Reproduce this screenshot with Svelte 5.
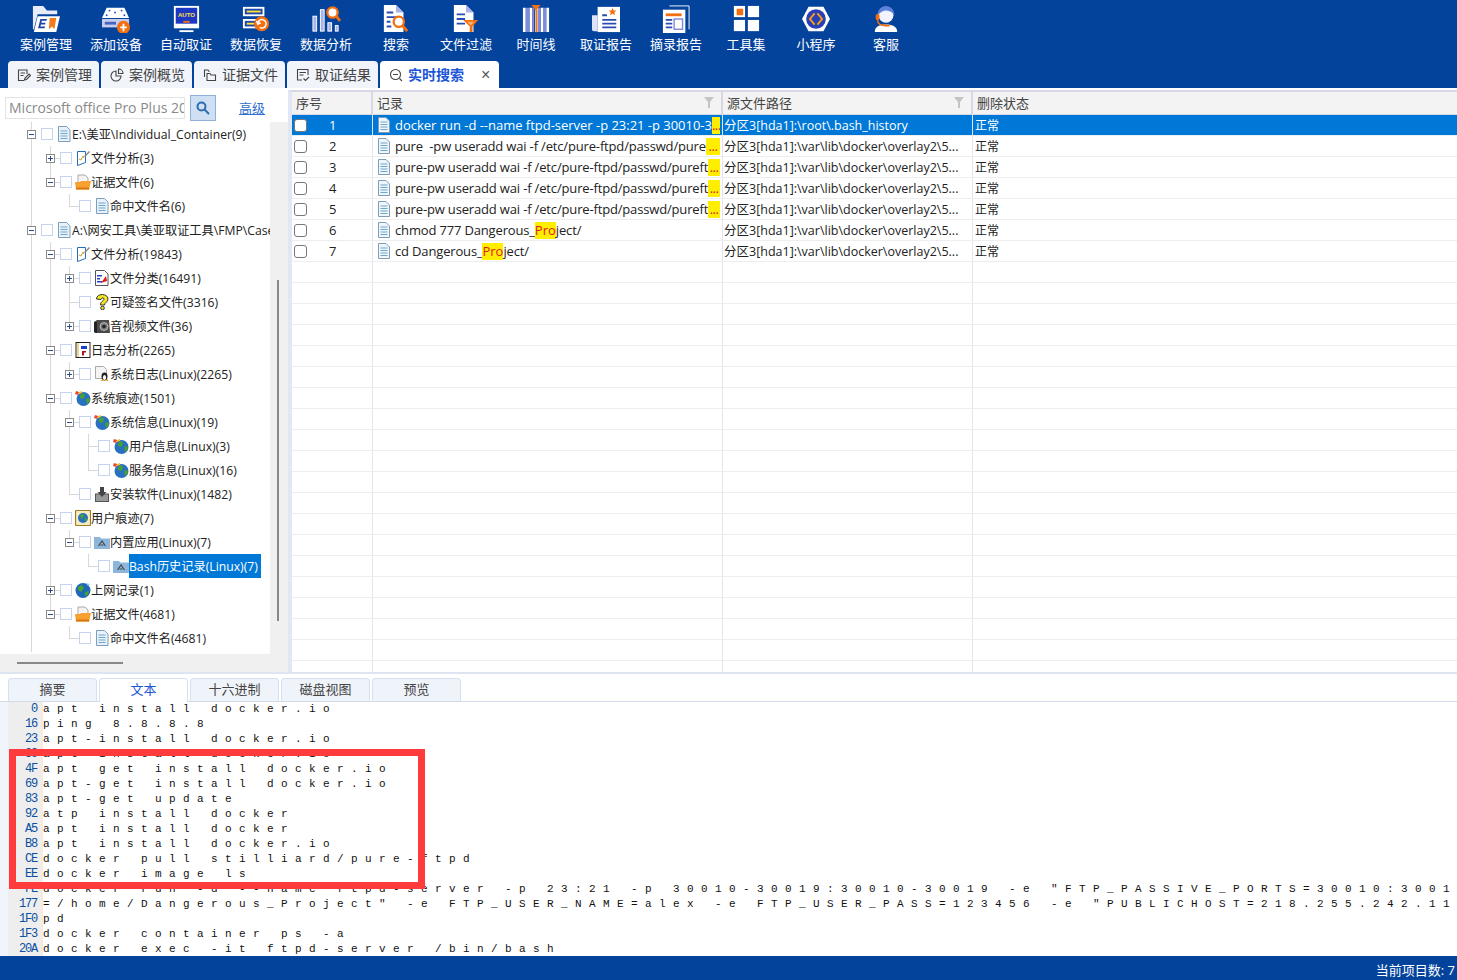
<script>
	const toolbar = [
		['case', '案例管理'],
		['device', '添加设备'],
		['auto', '自动取证'],
		['restore', '数据恢复'],
		['analyse', '数据分析'],
		['search', '搜索'],
		['filter', '文件过滤'],
		['timeline', '时间线'],
		['report', '取证报告'],
		['excerpt', '摘录报告'],
		['tools', '工具集'],
		['mini', '小程序'],
		['service', '客服']
	];

	const tabs = [
		['edit', '案例管理'],
		['pie', '案例概览'],
		['files', '证据文件'],
		['result', '取证结果']
	];

	const tree = [
		{
			icon: 'doc', label: 'E:\\美亚\\Individual_Container(9)', exp: '-',
			children: [
				{ icon: 'analysis', label: '文件分析(3)', exp: '+' },
				{
					icon: 'folder', label: '证据文件(6)', exp: '-',
					children: [{ icon: 'doc', label: '命中文件名(6)' }]
				}
			]
		},
		{
			icon: 'doc', label: 'A:\\网安工具\\美亚取证工具\\FMP\\Case_2023', exp: '-',
			children: [
				{
					icon: 'analysis', label: '文件分析(19843)', exp: '-',
					children: [
						{ icon: 'classify', label: '文件分类(16491)', exp: '+' },
						{ icon: 'question', label: '可疑签名文件(3316)' },
						{ icon: 'camera', label: '音视频文件(36)', exp: '+' }
					]
				},
				{
					icon: 'log', label: '日志分析(2265)', exp: '-',
					children: [{ icon: 'linux', label: '系统日志(Linux)(2265)', exp: '+' }]
				},
				{
					icon: 'globe', label: '系统痕迹(1501)', exp: '-',
					children: [
						{
							icon: 'globe', label: '系统信息(Linux)(19)', exp: '-',
							children: [
								{ icon: 'globe', label: '用户信息(Linux)(3)' },
								{ icon: 'globe', label: '服务信息(Linux)(16)' }
							]
						},
						{ icon: 'install', label: '安装软件(Linux)(1482)' }
					]
				},
				{
					icon: 'trace', label: '用户痕迹(7)', exp: '-',
					children: [
						{
							icon: 'app', label: '内置应用(Linux)(7)', exp: '-',
							children: [{ icon: 'app', label: 'Bash历史记录(Linux)(7)', selected: true }]
						}
					]
				},
				{ icon: 'net', label: '上网记录(1)', exp: '+' },
				{
					icon: 'folder', label: '证据文件(4681)', exp: '-',
					children: [{ icon: 'doc', label: '命中文件名(4681)' }]
				}
			]
		}
	];

	// walk the tree once so each row knows which guide lines cross it
	function flatten(nodes, level = 0, pass = []) {
		return nodes.flatMap((node, i) => {
			const last = i === nodes.length - 1;
			const row = { ...node, level, pass, last };
			const below = level > 0 && !last ? [...pass, level] : pass;
			return [row, ...flatten(node.children ?? [], level + 1, below)];
		});
	}
	const rows = flatten(tree);

	const varPath = '分区3[hda1]:\\var\\lib\\docker\\overlay2\\5...';
	const pwLine = 'pure-pw useradd wai -f /etc/pure-ftpd/passwd/pureft';
	const records = [
		{ text: 'docker run -d --name ftpd-server -p 23:21 -p 30010-3', more: true, path: '分区3[hda1]:\\root\\.bash_history' },
		{ text: 'pure  -pw useradd wai -f /etc/pure-ftpd/passwd/pure', more: true, path: varPath },
		{ text: pwLine, more: true, path: varPath },
		{ text: pwLine, more: true, path: varPath },
		{ text: pwLine, more: true, path: varPath },
		{ text: 'chmod 777 Dangerous_', hit: 'Pro', rest: 'ject/', path: varPath },
		{ text: 'cd Dangerous_', hit: 'Pro', rest: 'ject/', path: varPath }
	];
	const blanks = Array(20);

	const lines = [
		['0', 'apt install docker.io'],
		['16', 'ping 8.8.8.8'],
		['23', 'apt-install docker.io'],
		['39', 'apt install docker.io'],
		['4F', 'apt get install docker.io'],
		['69', 'apt-get install docker.io'],
		['83', 'apt-get update'],
		['92', 'atp install docker'],
		['A5', 'apt install docker'],
		['B8', 'apt install docker.io'],
		['CE', 'docker pull stilliard/pure-ftpd'],
		['EE', 'docker image ls'],
		['FE', 'docker run -d --name ftpd-server -p 23:21 -p 30010-30019:30010-30019 -e "FTP_PASSIVE_PORTS=30010:30019"'],
		['177', '=/home/Dangerous_Project" -e FTP_USER_NAME=alex -e FTP_USER_PASS=123456 -e "PUBLICHOST=218.255.242.114"'],
		['1F0', 'pd'],
		['1F3', 'docker container ps -a'],
		['20A', 'docker exec -it ftpd-server /bin/bash']
	];
</script>

{#snippet toolIcon(name)}
	<svg class="tool-icon" viewBox="0 0 32 30">
		{#if name === 'case'}
			<path d="M2 1h11l4 5h11v4H7L3 26H2z" fill="#e8ebfa" />
			<path d="M7 12h24l-4 17H3z" fill="#fff" />
			<path d="M10 15h7l-.5 2h-5l-.5 2h4.500l-.5 2h-4.500l-.5 2h5l-.5 2h-7z" fill="#1d43a8" />
			<path d="M20 14h7l-2 12-2.500-3-3.500 3z" fill="#f47a1c" />
		{:else if name === 'device'}
			<path d="M6 3h19l5 11H1z" fill="#fff" />
			<circle cx="9" cy="6" r="1" fill="#2a4bb0" /><circle cx="22" cy="6" r="1" fill="#2a4bb0" />
			<circle cx="6" cy="11" r="1" fill="#2a4bb0" /><circle cx="25" cy="11" r="1" fill="#2a4bb0" />
			<circle cx="15" cy="8" r="1" fill="#2a4bb0" />
			<path d="M1 15h29v9H1z" fill="#c7cdf0" />
			<rect x="4" y="18" width="12" height="3" fill="#4565c0" />
			<circle cx="24" cy="24" r="7" fill="#f46f10" />
			<path d="M20.500 23h2.500v-3h2v3h2.500v2h-2.500v3h-2v-3h-2.500z" fill="#fff" />
		{:else if name === 'auto'}
			<rect x="3" y="1" width="27" height="24" fill="#fff" />
			<rect x="5" y="3" width="23" height="17" fill="#1c37c4" />
			<text x="16.500" y="13" class="auto">AUTO</text>
			<rect x="13" y="17" width="7" height="2" fill="#f46f10" />
			<rect x="9" y="27" width="15" height="2" fill="#fff" />
		{:else if name === 'restore'}
			<rect x="2" y="2" width="23" height="10" fill="#fff" />
			<rect x="4" y="4" width="19" height="6" fill="#1d46a8" />
			<rect x="6" y="6" width="15" height="2" fill="#ffe23a" />
			<rect x="2" y="15" width="16" height="10" fill="#fff" />
			<rect x="4" y="17" width="12" height="6" fill="#1d46a8" />
			<rect x="6" y="19" width="8" height="2" fill="#ffe23a" />
			<circle cx="22" cy="20" r="8" fill="#f46f10" />
			<path d="M18 19a4.500 4.500 0 1 1 2 5M16.500 17l1.500 3.500 3-1.500" fill="none" stroke="#fff" stroke-width="1.600" />
		{:else if name === 'analyse'}
			<rect x="2" y="12" width="4" height="16" fill="#aab2ea" stroke="#fff" />
			<rect x="10" y="5" width="4" height="23" fill="#aab2ea" stroke="#fff" />
			<rect x="18" y="19" width="4" height="9" fill="#aab2ea" stroke="#fff" />
			<rect x="26" y="22" width="3" height="6" fill="#aab2ea" stroke="#fff" />
			<circle cx="23" cy="8" r="5.500" fill="#fff" stroke="#f46f10" stroke-width="2.500" />
			<path d="M27 12l4 5" stroke="#f46f10" stroke-width="3" />
		{:else if name === 'search'}
			<path d="M3 0h13l8 8v21H3z" fill="#fff" />
			<path d="M16 0v8h8z" fill="#aab2ea" />
			<path d="M6 7h7v2H6zM6 12h10v2H6zM6 17h4v2H6zM6 22h5v2H6z" fill="#2a4bb0" />
			<circle cx="19" cy="18" r="5.500" fill="#fff" stroke="#f46f10" stroke-width="2.500" />
			<path d="M23 22l5 6" stroke="#f46f10" stroke-width="3" />
		{:else if name === 'filter'}
			<path d="M3 0h13l8 8v21H3z" fill="#fff" />
			<path d="M16 0v8h8z" fill="#aab2ea" />
			<path d="M6 9h9v2H6zM6 14h9v2H6zM6 19h9v2H6z" fill="#2a4bb0" />
			<path d="M13 16h16l-6 7v6h-3v-6z" fill="#f46f10" />
			<path d="M17 18h8l-4 4z" fill="#ffb070" />
		{:else if name === 'timeline'}
			<path d="M2 3h3v26H2zM9 3h3v26H9zM21 3h3v26h-3zM27 3h3v26h-3z" fill="#fff" />
			<path d="M5 3h4v26H5zM12 3h2v26h-2zM18 3h3v26h-3zM24 3h3v26h-3z" fill="#7f8ad8" />
			<path d="M15 3h3v26h-3z" fill="#fff" />
			<path d="M11 0h10l-5 6z" fill="#f46f10" />
			<rect x="15.500" y="5" width="2" height="24" fill="#f46f10" />
		{:else if name === 'report'}
			<path d="M1 11h6v17H3a2 2 0 0 1-2-2z" fill="#dfe3f8" />
			<rect x="7" y="2" width="24" height="27" fill="#fff" />
			<path d="M12 10h5v2h-5zM12 15h15v2H12zM12 19h15v2H12zM12 23h15v2H12z" fill="#2a4bb0" />
			<path d="M23 3l1.200 2.800 3 .2-2.300 2 .8 3-2.700-1.600-2.700 1.600.8-3-2.300-2 3-.2z" fill="#f46f10" />
		{:else if name === 'excerpt'}
			<path d="M9 1h21v25" fill="none" stroke="#fff" />
			<rect x="2" y="5" width="24" height="25" fill="#fff" />
			<rect x="5" y="9" width="17" height="3" fill="#f46f10" />
			<path d="M5 15h7v2H5zM5 19h7v2H5zM5 23h7v2H5z" fill="#2a4bb0" />
			<rect x="14" y="15" width="9" height="11" fill="none" stroke="#7f8ad8" stroke-width="1.500" />
		{:else if name === 'tools'}
			<rect x="3" y="1" width="12" height="12" fill="#fff" />
			<rect x="6" y="4" width="7" height="7" fill="#f46f10" />
			<rect x="18" y="1" width="12" height="12" fill="#fff" />
			<rect x="3" y="16" width="12" height="12" fill="#fff" />
			<rect x="18" y="16" width="12" height="12" fill="#fff" />
		{:else if name === 'mini'}
			<path d="M8 2h16l7 13-7 13H8L1 15z" fill="#fff" />
			<circle cx="16" cy="15" r="10.500" fill="#2a3fb5" />
			<path d="M14.500 9l-5 6 5 6M17.500 9l5 6-5 6" fill="none" stroke="#f7a11c" stroke-width="2" />
		{:else if name === 'service'}
			<path d="M4 29c0-6 5-8 12-8s12 2 12 8z" fill="#fff" />
			<circle cx="16" cy="11" r="8" fill="#f1f3ff" />
			<path d="M7 11c0-6 4-10 9-10s9 4 9 10c-3-4-6-5-9-5s-6 2-9 5z" fill="#5b82d8" />
			<path d="M7 10v6c0 4 4 6 9 6" fill="none" stroke="#f46f10" stroke-width="1.500" />
			<rect x="5" y="10" width="4" height="6" rx="1.500" fill="#f46f10" />
			<rect x="14" y="21" width="6" height="2" rx="1" fill="#f46f10" />
		{/if}
	</svg>
{/snippet}

{#snippet tabIcon(name)}
	<svg class="tab-icon" viewBox="0 0 14 14" fill="none" stroke="#444" stroke-width="1.100">
		{#if name === 'edit'}
			<path d="M10 6V2H1.500v10.500H7M3.500 5h4.500M3.500 7.500h3" />
			<path d="M7.500 12l.5-2 4-4 1.500 1.500-4 4z" />
		{:else if name === 'pie'}
			<path d="M6 3a5 5 0 1 0 5 5H6z" />
			<path d="M8.500 1a4.500 4.500 0 0 1 4.500 4.500H8.500z" />
		{:else if name === 'files'}
			<path d="M1.500 9V2H5l1 1.500h.5M4 12.500V5.500h3l1 1.500h4.500v5.500z" />
		{:else if name === 'result'}
			<path d="M12 7V1.500H1.500V12H6M3.500 4.500h6.500M3.500 7h4" />
			<path d="M7.500 10.500l2 2 3.500-3.500" />
		{:else if name === 'live'}
			<circle cx="6.500" cy="6.500" r="5" />
			<path d="M4 6.500h5M10.500 10.500l2.500 2.500" />
		{/if}
	</svg>
{/snippet}

{#snippet fileIcon()}
	<svg class="file-icon" viewBox="0 0 12 16">
		<path d="M.5.5h7.500l3.500 3.500v11.500H.5z" fill="#eef5fb" stroke="#7d9db8" />
		<path d="M2.500 5h7M2.500 7.500h7M2.500 10h7M2.500 12.500h7" stroke="#6fa5c8" />
	</svg>
{/snippet}

{#snippet treeIcon(name)}
	<svg class="tree-icon" viewBox="0 0 16 16">
		{#if name === 'doc'}
			<path d="M2.500.5h8l3.500 3.500v11.500H2.500z" fill="#e9f2fa" stroke="#7d9db8" />
			<path d="M4.500 5h7M4.500 7.500h7M4.500 10h7M4.500 12.500h7" stroke="#6fa5c8" />
		{:else if name === 'analysis'}
			<path d="M2.500 1.500h8v11l-8 3z" fill="#fff" stroke="#2a6ab8" />
			<path d="M4 9l2 1 2-4 1 2" fill="none" stroke="#c8a030" />
			<path d="M9 6l5-5 1 1-5 5z" fill="#888" />
		{:else if name === 'folder'}
			<path d="M3 1h7l3 3v5H3z" fill="#f4f4f4" stroke="#aaa" />
			<path d="M0 8h5l1-1h10l-2 8.500H1z" fill="#f8a030" />
			<path d="M1 13.500h13.500l-.5 2H1z" fill="#d87810" />
		{:else if name === 'classify'}
			<path d="M1.500.5h9l3.500 3.500v11.500h-12.500z" fill="#fff" stroke="#555" />
			<path d="M3 5h5v1.500H3zM3 8h3v1.500H3zM3 11h5v1.500H3z" fill="#2a40c8" />
			<path d="M7 13l5-7 1 5z" fill="#e01818" />
		{:else if name === 'question'}
			<path d="M2.500 5c0-6 11.500-6 11.500 0 0 3-3.500 3.500-3.500 6h-4c0-4 3.500-4 3.500-6 0-1.500-3-1.500-3 .5z" fill="#f6e51e" stroke="#333" />
			<circle cx="8.500" cy="14" r="1.800" fill="#f6e51e" stroke="#333" />
		{:else if name === 'camera'}
			<path d="M0 4l3-2h12l1 13H2l-2-1z" fill="#4a4a4a" />
			<path d="M0 4h3v11H2l-2-1z" fill="#222" />
			<circle cx="10" cy="8.500" r="4" fill="#777" stroke="#ddd" stroke-width=".7" />
			<circle cx="10" cy="8.500" r="1.800" fill="#222" />
		{:else if name === 'log'}
			<rect x="1" y=".5" width="14" height="15" fill="#fff" stroke="#222" />
			<rect x="2" y="1" width="2" height="14" fill="#e8d890" />
			<path d="M6 4h6v3H6z" fill="#2040c8" />
			<path d="M7 9h4v1.500H9v3H7z" fill="#b01818" />
		{:else if name === 'linux'}
			<path d="M1.500.5h8l3 3v9h-11z" fill="#f4f4f4" stroke="#aaa" />
			<ellipse cx="10.500" cy="10.500" rx="3" ry="4" fill="#222" />
			<ellipse cx="10.500" cy="11.500" rx="1.600" ry="2.500" fill="#fff" />
			<path d="M6.500 15l2-2 1 2zM11.500 15l2-2 1 2z" fill="#f0b010" />
		{:else if name === 'globe'}
			<circle cx="8.500" cy="9" r="7" fill="#2a70c0" />
			<path d="M5 5l4-2 1 3-2 3-3-1zM11 9l3-1 1 3-3 3z" fill="#48a030" />
			<path d="M1 1l3 1-1 3-3-1z" fill="#e8452a" />
			<path d="M4 2l3-1v2l-3 1z" fill="#f0c020" />
		{:else if name === 'install'}
			<rect x="1.500" y="8" width="13" height="7.500" fill="#999" stroke="#555" />
			<path d="M6 1h4v5h2.500L8 11 3.500 6H6z" fill="#444" />
		{:else if name === 'trace'}
			<rect x=".5" y=".5" width="15" height="15" rx="1" fill="#f5ecc0" stroke="#a07c20" stroke-width="1.200" />
			<circle cx="8" cy="8" r="5" fill="#2a70c0" />
			<path d="M5 5l3-1 1 3-3 2zM9 9l3-1-1 4z" fill="#48a030" />
		{:else if name === 'app'}
			<path d="M0 3h6l1 1.500h9V15H0z" fill="#8db6dc" />
			<path d="M4.500 12L8 7l3.500 5M6.500 11h3" fill="none" stroke="#444" stroke-width="1.100" />
		{:else if name === 'net'}
			<circle cx="8" cy="8.500" r="7.500" fill="#1f68b8" />
			<path d="M3 5l4-2 2 3-3 4-3-2zM10 10l4-1-1 4-3 1z" fill="#48a030" />
			<path d="M11 1l4 1-2 2z" fill="#9ac8f0" />
		{/if}
	</svg>
{/snippet}

{#snippet funnel()}
	<svg class="funnel" viewBox="0 0 10 11"><path d="M0 0h10L6 5v6L4 11V5z" fill="#c4c4c4" /></svg>
{/snippet}

<div class="app">
	<header class="toolbar">
		{#each toolbar as [icon, label]}
			<div class="tool">
				{@render toolIcon(icon)}
				<span>{label}</span>
			</div>
		{/each}
	</header>

	<nav class="tabs">
		{#each tabs as [icon, label]}
			<div class="tab">{@render tabIcon(icon)}<span>{label}</span></div>
		{/each}
		<div class="tab active">
			{@render tabIcon('live')}<span>实时搜索</span><i class="close">×</i>
		</div>
	</nav>

	<main class="main">
		<aside class="side">
			<div class="side-inner">
				<div class="search">
					<div class="search-input">Microsoft office Pro Plus 2007</div>
					<button class="search-btn" aria-label="搜索">
						<svg viewBox="0 0 14 14" fill="none" stroke="#2d6cae" stroke-width="2">
							<circle cx="5.500" cy="5.500" r="4" /><path d="M8.500 8.500l4.500 4.500" />
						</svg>
					</button>
					<a class="advanced" href="#top">高级</a>
				</div>
				<div class="tree">
					{#each rows as row}
						<div class="row" style="padding-left: {27 + row.level * 19}px">
							{#each row.pass as p}
								<i class="guide" style="left: {31 + p * 19}px"></i>
							{/each}
							{#if row.level > 0}
								<i class="guide" class:half={row.last} style="left: {31 + row.level * 19}px"></i>
								<i class="stub" style="left: {31 + row.level * 19}px"></i>
							{/if}
							<span class="exp">
								{#if row.exp}
									<b class="box">
										<i class="h"></i>
										{#if row.exp === '+'}<i class="v"></i>{/if}
									</b>
								{/if}
							</span>
							<span class="check"></span>
							{@render treeIcon(row.icon)}
							<span class="label" class:selected={row.selected}>{row.label}</span>
						</div>
					{/each}
				</div>
				<div class="hscroll"><i></i></div>
			</div>
			<div class="vscroll"><i></i></div>
		</aside>

		<section class="table">
			<div class="head">
				<div class="cell">序号</div>
				<div class="cell">记录{@render funnel()}</div>
				<div class="cell">源文件路径{@render funnel()}</div>
				<div class="cell">删除状态</div>
			</div>
			{#each records as r, i}
				<div class="line" class:current={i === 0}>
					<div class="cell no"><span class="tick"></span><span class="num">{i + 1}</span></div>
					<div class="cell rec">
						{@render fileIcon()}
						<span class="rec-text">{r.text}{#if r.hit}<mark>{r.hit}</mark>{r.rest}{/if}</span>
						{#if r.more}<mark class="more">...</mark>{/if}
					</div>
					<div class="cell path">{r.path}</div>
					<div class="cell state">正常</div>
				</div>
			{/each}
			{#each blanks as _}
				<div class="line">
					<div class="cell"></div><div class="cell"></div><div class="cell"></div><div class="cell"></div>
				</div>
			{/each}
		</section>
	</main>

	<section class="detail">
		<div class="detail-tabs">
			<div class="dtab">摘要</div>
			<div class="dtab active">文本</div>
			<div class="dtab">十六进制</div>
			<div class="dtab">磁盘视图</div>
			<div class="dtab">预览</div>
		</div>
		<div class="text-pane">
			{#each lines as [offset, text]}
				<div class="text-line"><span class="offset">{offset}</span><span class="strip"></span><span class="chars">{text}</span></div>
			{/each}
			<div class="mark-box"></div>
		</div>
	</section>

	<footer class="status">当前项目数: 7</footer>
</div>

<style>
	:global(body) {
		margin: 0;
		overflow: hidden;
	}

	.app {
		display: flex;
		flex-direction: column;
		height: 980px;
		font: 13px/20px 'Open Sans', 'Noto Sans CJK SC', sans-serif;
		color: #222;
		background: #fff;
		overflow: hidden;
	}

	.toolbar {
		display: flex;
		height: 60px;
		padding: 5px 0 0 11px;
		box-sizing: border-box;
		background: #03439c;
		flex: none;
	}

	.tool {
		display: flex;
		flex-direction: column;
		align-items: center;
		width: 70px;
		color: #fff;
	}

	.tool span {
		margin-top: 1px;
		line-height: 20px;
	}

	.tool-icon {
		width: 32px;
		height: 28px;
	}

	.auto {
		font: bold 6.500px 'Liberation Sans', sans-serif;
		fill: #ffe23a;
		text-anchor: middle;
	}

	.tabs {
		display: flex;
		gap: 2px;
		height: 28px;
		padding-left: 8px;
		background: #03439c;
		flex: none;
	}

	.tab {
		display: flex;
		align-items: center;
		width: 91px;
		height: 27px;
		margin-top: 1px;
		padding-left: 9px;
		box-sizing: border-box;
		border-radius: 4px 4px 0 0;
		background: #f1f4fa;
		color: #444;
		font-size: 14px;
	}

	.tab span {
		margin-left: 5px;
		white-space: nowrap;
	}

	.tab-icon {
		width: 14px;
		height: 14px;
		flex: none;
	}

	.tab.active {
		width: 119px;
		background: #fff;
		color: #1a55d8;
		font-weight: 700;
	}

	.close {
		margin-left: 17px;
		font: 16px 'Liberation Sans', sans-serif;
		color: #555;
	}

	.main {
		display: flex;
		height: 584px;
		flex: none;
	}

	.side {
		display: flex;
		width: 288px;
		background: #f0f0f0;
		flex: none;
	}

	.side-inner {
		display: flex;
		flex-direction: column;
		width: 270px;
		flex: none;
	}

	.search {
		display: flex;
		align-items: center;
		width: 288px;
		height: 34px;
		padding: 6px 0 0 5px;
		box-sizing: border-box;
		background: #fff;
		flex: none;
	}

	.search-input {
		width: 180px;
		height: 22px;
		box-sizing: border-box;
		border: 1px solid #e3e3e3;
		padding-left: 3px;
		font-size: 14px;
		line-height: 20px;
		color: #8a8a8a;
		white-space: nowrap;
		overflow: hidden;
	}

	.search-btn {
		width: 26px;
		height: 26px;
		margin-left: 5px;
		padding: 0;
		display: flex;
		align-items: center;
		justify-content: center;
		background: #cfe0f5;
		border: 1px solid #8fb0d8;
	}

	.search-btn svg {
		width: 14px;
		height: 14px;
	}

	.advanced {
		margin-left: 23px;
		color: #2f6fd0;
	}

	.tree {
		position: relative;
		height: 532px;
		background: #fff;
		overflow: hidden;
		flex: none;
		font-size: 12.200px;
	}

	.tree::before {
		content: '';
		position: absolute;
		left: 31px;
		top: 0;
		bottom: 2px;
		width: 1px;
		background: #d8d8d8;
	}

	.row {
		position: relative;
		display: flex;
		align-items: center;
		height: 24px;
		white-space: nowrap;
	}

	.guide {
		position: absolute;
		top: 0;
		bottom: 0;
		width: 1px;
		background: #d8d8d8;
	}

	.guide.half {
		bottom: 12px;
	}

	.stub {
		position: absolute;
		top: 12px;
		width: 10px;
		height: 1px;
		background: #d8d8d8;
	}

	.exp {
		position: relative;
		width: 9px;
		height: 9px;
		margin-right: 5px;
		flex: none;
	}

	.box {
		position: absolute;
		inset: 0;
		border: 1px solid #8a8a8a;
		background: #fff;
	}

	.box i {
		position: absolute;
		background: #2b4a90;
	}

	.box .h {
		left: 1px;
		right: 1px;
		top: 3px;
		height: 1px;
	}

	.box .v {
		top: 1px;
		bottom: 1px;
		left: 3px;
		width: 1px;
	}

	.check {
		position: relative;
		width: 12px;
		height: 12px;
		margin-right: 3px;
		border: 1px solid #c5d3f0;
		box-sizing: border-box;
		background: #fff;
		flex: none;
	}

	.tree-icon {
		width: 16px;
		height: 16px;
		flex: none;
	}

	.label {
		height: 24px;
		line-height: 26px;
	}

	.label.selected {
		padding-right: 3px;
		background: #0078d7;
		color: #fff;
	}

	.hscroll {
		position: relative;
		flex: 1;
		width: 288px;
		background: #f0f0f0;
	}

	.hscroll i {
		position: absolute;
		left: 17px;
		top: 8px;
		width: 106px;
		height: 2px;
		background: #888;
	}

	.vscroll {
		position: relative;
		flex: 1;
	}

	.vscroll i {
		position: absolute;
		left: 7px;
		top: 192px;
		width: 2px;
		height: 341px;
		background: #888;
	}

	.table {
		flex: 1;
		min-width: 0;
		margin-top: 2px;
		border-top: 2px solid #d7d7e6;
		border-left: 4px solid #e1e7f3;
		overflow: hidden;
	}

	.head,
	.line {
		display: grid;
		grid-template-columns: 81px 350px 250px 1fr;
	}

	.head {
		height: 22px;
		border-bottom: 1px solid #d7d7e6;
		background: #f3f3f3;
		color: #444;
	}

	.head .cell {
		position: relative;
		padding-left: 4px;
		line-height: 22px;
		border-right: 2px solid #d7d7e6;
	}

	.head .cell:last-child,
	.line .cell:last-child {
		border-right: none;
	}

	.funnel {
		position: absolute;
		right: 7px;
		top: 5px;
		width: 10px;
		height: 11px;
	}

	.line {
		height: 21px;
		box-sizing: border-box;
		border-bottom: 1px solid #eeeeee;
		white-space: nowrap;
	}

	.line .cell {
		display: flex;
		align-items: center;
		overflow: hidden;
		border-right: 1px solid #e4e4ee;
		line-height: 20px;
	}

	.line.current {
		background: #0078d7;
		color: #fff;
	}

	.tick {
		width: 11px;
		height: 11px;
		margin-left: 2px;
		border: 1px solid #777;
		border-radius: 3px;
		background: #fff;
		flex: none;
	}

	.num {
		margin-left: 22px;
	}

	.file-icon {
		width: 12px;
		height: 16px;
		margin: 0 5px;
		flex: none;
	}

	.rec-text {
		white-space: pre;
		flex: none;
		letter-spacing: -0.16px;
	}

	.current .rec-text {
		letter-spacing: -0.02px;
	}

	mark {
		background: #ffee00;
		color: #e02020;
		line-height: 17px;
		display: inline-block;
		letter-spacing: 0;
	}

	.more {
		flex: 1;
		margin-right: 2px;
		text-align: center;
		letter-spacing: -0.5px;
		overflow: hidden;
	}

	.path {
		padding: 2px 0 0 1px;
		font-size: 12.500px;
	}

	.state {
		padding: 2px 0 0 2px;
		font-size: 12px;
	}

	.detail {
		display: flex;
		flex-direction: column;
		height: 284px;
		border-top: 2px solid #dde4f2;
		flex: none;
		box-sizing: border-box;
	}

	.detail-tabs {
		display: flex;
		gap: 2px;
		height: 28px;
		padding: 4px 0 0 8px;
		box-sizing: border-box;
		border-bottom: 1px solid #d3dbea;
		flex: none;
	}

	.dtab {
		width: 89px;
		height: 23px;
		box-sizing: border-box;
		border: 1px solid #d7e0f0;
		border-bottom: none;
		border-radius: 4px 4px 0 0;
		background: #eff3fa;
		color: #444;
		text-align: center;
		line-height: 20px;
	}

	.dtab.active {
		height: 24px;
		background: #fff;
		color: #1a55d8;
	}

	.text-pane {
		position: relative;
		flex: 1;
		padding-left: 8px;
		background: #f1f5fb;
		overflow: hidden;
	}

	.text-line {
		display: flex;
		height: 15px;
		background: #fff;
		white-space: pre;
	}

	.offset {
		width: 29px;
		padding-right: 4px;
		background: #eeeeee;
		color: #0b4f9e;
		font: 12px/15px 'Liberation Mono', monospace;
		letter-spacing: -1.200px;
		text-align: right;
		flex: none;
	}

	.strip {
		width: 2px;
		background: #fde9d9;
		flex: none;
	}

	.chars {
		font: 11px/15px 'Liberation Mono', monospace;
		letter-spacing: 7.400px;
		color: #111;
	}

	.mark-box {
		position: absolute;
		left: 9px;
		top: 47px;
		width: 416px;
		height: 140px;
		box-sizing: border-box;
		border: 7px solid #ff3b3b;
	}

	.status {
		height: 24px;
		padding-right: 2px;
		line-height: 28px;
		background: #03439c;
		color: #fff;
		text-align: right;
		flex: none;
	}
</style>
